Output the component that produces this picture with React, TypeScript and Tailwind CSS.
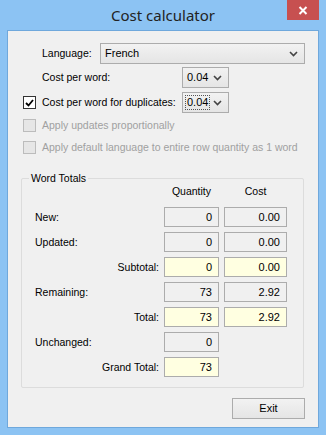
import React from 'react';

const font = { fontFamily: '"Liberation Sans", Arial, sans-serif' };

function Chevron() {
  return (
    <svg width="9" height="6" viewBox="0 0 9 6" className="shrink-0">
      <path d="M1 1 L4.5 4.5 L8 1" fill="none" stroke="#444" strokeWidth="1.6" />
    </svg>
  );
}

function Combo({ value, width, focus }: { value: string; width: string; focus?: boolean }) {
  return (
    <div
      className={`${width} h-[21px] flex items-center justify-between pl-[3px] pr-[6px] border border-[#acacac] bg-gradient-to-b from-[#f2f2f2] to-[#e5e5e5] text-black text-[11px]`}
    >
      <span className={focus ? 'outline outline-1 outline-dotted outline-[#555] px-[1px]' : 'px-[1px]'}>
        {value}
      </span>
      <Chevron />
    </div>
  );
}

function Check({ checked, disabled }: { checked?: boolean; disabled?: boolean }) {
  return (
    <div
      className={`w-[13px] h-[13px] shrink-0 border flex items-center justify-center ${
        disabled ? 'border-[#bcbcbc] bg-[#e6e6e6]' : 'border-[#333] bg-white'
      }`}
    >
      {checked && (
        <svg width="9" height="8" viewBox="0 0 9 8">
          <path d="M1 4 L3.5 6.5 L8 1" fill="none" stroke="#000" strokeWidth="1.8" />
        </svg>
      )}
    </div>
  );
}

function Box({ value, yellow, wide }: { value: string; yellow?: boolean; wide?: boolean }) {
  return (
    <div
      className={`${wide ? 'w-[63px]' : 'w-[55px]'} h-[20px] border border-[#acacac] flex items-center justify-end pr-[6px] text-black text-[11px] ${
        yellow ? 'bg-[#ffffe1]' : 'bg-[#f0f0f0]'
      }`}
    >
      {value}
    </div>
  );
}

type Row = { label: string; right?: boolean; qty: string; cost?: string; yellow?: boolean };

const rows: Row[] = [
  { label: 'New:', qty: '0', cost: '0.00' },
  { label: 'Updated:', qty: '0', cost: '0.00' },
  { label: 'Subtotal:', right: true, qty: '0', cost: '0.00', yellow: true },
  { label: 'Remaining:', qty: '73', cost: '2.92' },
  { label: 'Total:', right: true, qty: '73', cost: '2.92', yellow: true },
  { label: 'Unchanged:', qty: '0' },
  { label: 'Grand Total:', right: true, qty: '73', yellow: true },
];

export default function App() {
  return (
    <div className="w-[326px] h-[435px] bg-[#8cc3f3] flex flex-col text-[10.5px] leading-[13px] text-black" style={font}>
      {/* Title bar */}
      <div className="relative h-[30px] flex items-center justify-center">
        <span className="text-[15px] leading-[20px] text-[#222] -mt-[1px]" style={{ fontFamily: '"Noto Sans", "Open Sans", sans-serif' }}>
          Cost calculator
        </span>
        <div className="absolute top-0 right-[7px] w-[32px] h-[20px] bg-[#c75050] flex items-center justify-center">
          <svg width="10" height="9" viewBox="0 0 10 9">
            <path d="M1.5 1 L8.5 8 M8.5 1 L1.5 8" stroke="#fff" strokeWidth="2" />
          </svg>
        </div>
      </div>

      {/* Client area */}
      <div className="mx-[7px] h-[398px] border border-[#6fa8dc] bg-[#f0f0f0] pt-[12px]">
        <div className="flex items-center h-[21px] pl-[34px]">
          <span className="w-[58px]">Language:</span>
          <Combo value="French" width="w-[205px]" />
        </div>

        <div className="flex items-center h-[21px] pl-[34px] mt-[3px]">
          <span className="w-[140px]">Cost per word:</span>
          <Combo value="0.04" width="w-[47px]" />
        </div>

        <div className="flex items-center h-[21px] pl-[15px] mt-[4px]">
          <Check checked />
          <span className="ml-[6px] w-[140px]">Cost per word for duplicates:</span>
          <Combo value="0.04" width="w-[47px]" focus />
        </div>

        <div className="flex items-center h-[13px] pl-[15px] mt-[6px] text-[#a0a0a0]">
          <Check disabled />
          <span className="ml-[6px]">Apply updates proportionally</span>
        </div>

        <div className="flex items-center h-[13px] pl-[15px] mt-[9px] text-[#a0a0a0]">
          <Check disabled />
          <span className="ml-[6px]">Apply default language to entire row quantity as 1 word</span>
        </div>

        {/* Word Totals group */}
        <div className="relative ml-[13px] w-[283px] h-[210px] mt-[24px] border border-[#dcdcdc] rounded-[2px]">
          <span className="absolute -top-[7px] left-[7px] px-[2px] bg-[#f0f0f0]">Word Totals</span>
          <div className="flex mt-[6px] ml-[142px]">
            <span className="w-[55px] text-center">Quantity</span>
            <span className="w-[63px] ml-[5px] text-center">Cost</span>
          </div>
          <div className="flex flex-col gap-[5px] mt-[9px]">
            {rows.map((r) => (
              <div key={r.label} className="flex items-center h-[20px]">
                <span className={`w-[137px] ${r.right ? 'text-right' : 'pl-[13px]'}`}>{r.label}</span>
                <div className="ml-[5px]">
                  <Box value={r.qty} yellow={r.yellow} />
                </div>
                {r.cost && (
                  <div className="ml-[5px]">
                    <Box value={r.cost} yellow={r.yellow} wide />
                  </div>
                )}
              </div>
            ))}
          </div>
        </div>

        <div className="flex justify-end pr-[13px] mt-[10px]">
          <button className="w-[73px] h-[21px] border border-[#acacac] bg-gradient-to-b from-[#f2f2f2] to-[#e5e5e5] text-black text-[11px]">
            Exit
          </button>
        </div>
      </div>
    </div>
  );
}
